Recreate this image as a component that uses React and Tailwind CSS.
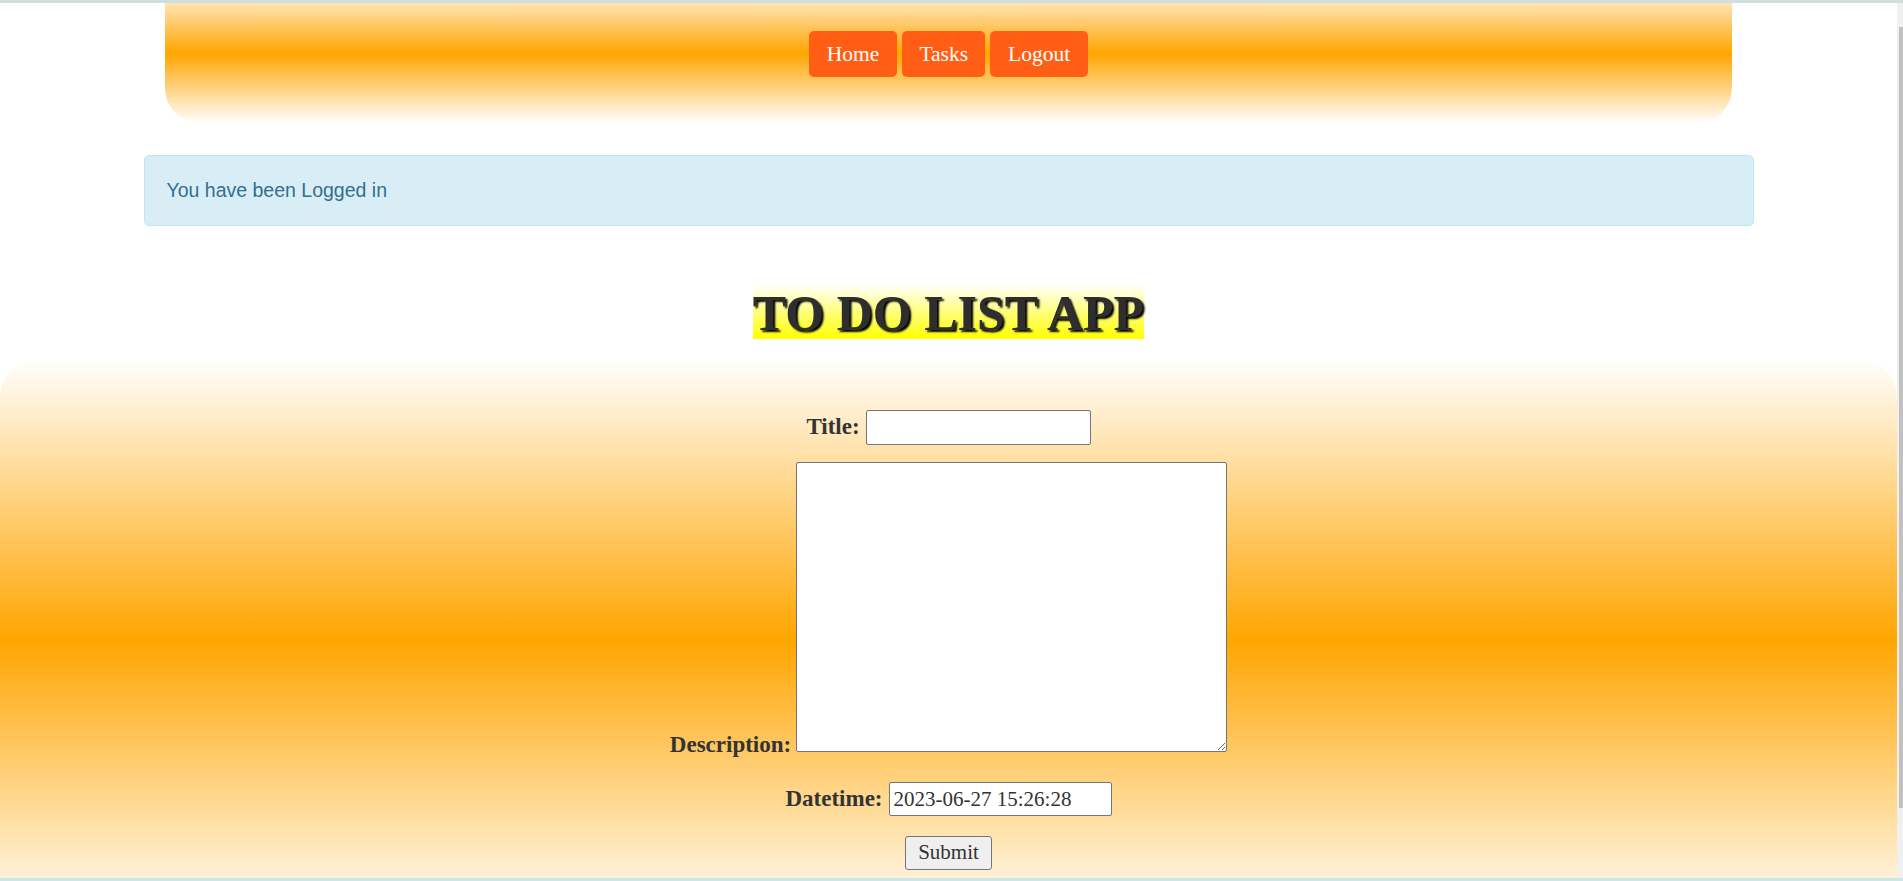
import React from 'react';

export default function App() {
  return (
    <div className="w-[1903px] h-[881px] overflow-hidden flex flex-col bg-white font-['Liberation_Serif',serif] text-[#333]">
      {/* window top strip */}
      <div className="h-[3px] shrink-0 bg-[#cfdfdf]"></div>

      <div className="flex flex-1 min-h-0">
        <main className="flex-1 min-w-0 overflow-hidden flex flex-col items-center">
          {/* nav header */}
          <header className="shrink-0 w-[1567px] h-[120px] rounded-b-[35px] bg-[linear-gradient(to_bottom,#ffe4b3_0%,#ffa500_42%,#ffffff_100%)] flex justify-center gap-[5px] pt-[28px]">
            <a className="h-[46px] px-[18px] flex items-center rounded-[5px] bg-[#ff5e14] text-white text-[21.5px]">Home</a>
            <a className="h-[46px] px-[17px] flex items-center rounded-[5px] bg-[#ff5e14] text-white text-[21.5px]">Tasks</a>
            <a className="h-[46px] px-[18px] flex items-center rounded-[5px] bg-[#ff5e14] text-white text-[21.5px]">Logout</a>
          </header>

          {/* flash message */}
          <div className="shrink-0 mt-[32px] w-[1610px] h-[71px] flex items-center px-[22px] rounded-[5px] border border-[#bce8f1] bg-[#d9edf7] text-[#31708f] font-['Liberation_Sans',Arial,sans-serif] text-[19.5px]">
            You have been Logged in
          </div>

          {/* app title */}
          <h1 className="shrink-0 mt-[58px] h-[55px] leading-[58px] text-[50px] font-bold tracking-[0px] text-[#2e2e2e] bg-[linear-gradient(to_bottom,#ffffff,#ffff00)] [text-shadow:2px_2px_2px_#000]">
            TO DO LIST APP
          </h1>

          {/* form */}
          <section className="shrink-0 mt-[19px] w-full h-[564px] rounded-t-[40px] bg-[linear-gradient(to_bottom,#ffffff_0%,#ffa500_50%,#ffffff_100%)] flex flex-col items-center pt-[52px]">
            <div className="flex items-center gap-[6px]">
              <label className="text-[23px] font-bold">Title:</label>
              <input type="text" className="w-[225px] h-[35px] bg-white border border-[#767676] rounded-[2px] px-[4px] text-[21px]" />
            </div>

            <div className="mt-[17px] flex items-end gap-[5px]">
              <label className="text-[23px] font-bold leading-[26px] translate-y-[6px]">Description:</label>
              <textarea className="w-[431px] h-[290px] bg-white border border-[#767676] rounded-[2px] p-[4px] text-[21px]"></textarea>
            </div>

            <div className="mt-[30px] flex items-center gap-[6px]">
              <label className="text-[23px] font-bold">Datetime:</label>
              <input type="text" defaultValue="2023-06-27 15:26:28" className="w-[223px] h-[34px] bg-white border border-[#767676] rounded-[2px] px-[4px] text-[21px] text-[#333]" />
            </div>

            <button className="mt-[19px] w-[87px] h-[34px] bg-[#efefef] border border-[#767676] rounded-[3px] text-[21px] text-[#333]">
              Submit
            </button>
          </section>
        </main>

        {/* scrollbar */}
        <div className="w-[6px] shrink-0 bg-[#f0f0f0] flex justify-end pt-[24px]">
          <div className="w-[4px] h-[781px] bg-[#c1c1c1]"></div>
        </div>
      </div>

      {/* window bottom strip */}
      <div className="h-[3px] shrink-0 bg-[#cde6e8]"></div>
    </div>
  );
}
